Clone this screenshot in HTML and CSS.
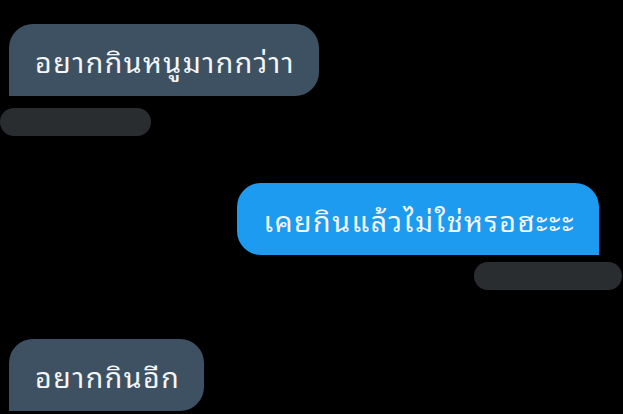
FILE: index.html
```html
<!DOCTYPE html>
<html lang="th">
<head>
<meta charset="utf-8">
<link rel="stylesheet" href="styles.css">
</head>
<body>
<div class="chat">
  <div class="msg in first">
    <div class="bubble in-bubble">อยากกินหนูมากกว่าา</div>
    <div class="meta meta-in"></div>
  </div>
  <div class="msg out">
    <div class="bubble out-bubble">เคยกินแล้วไม่ใช่หรอฮะะะ</div>
    <div class="meta meta-out"></div>
  </div>
  <div class="msg in last">
    <div class="bubble in-bubble">อยากกินอีก</div>
  </div>
</div>
</body>
</html>
```
FILE: styles.css
```css
html, body {
  margin: 0;
  padding: 0;
  background: #000;
  width: 623px;
  height: 414px;
  overflow: hidden;
}
.chat {
  display: flex;
  flex-direction: column;
  padding-top: 24px;
  font-family: "Noto Sans Thai Looped", "Noto Sans Thai", "Noto Sans", sans-serif;
}
.msg {
  display: flex;
  flex-direction: column;
}
.msg.in { align-items: flex-start; }
.msg.out { align-items: flex-end; margin-top: 47px; }
.msg.last { margin-top: 49px; }
.bubble {
  color: #f4f6f8;
  font-size: 28.5px;
  letter-spacing: 1.5px;
  line-height: 72px;
  height: 72px;
  padding: 0 24px 0 26px;
  box-sizing: border-box;
  white-space: nowrap;
}
.in-bubble {
  margin-left: 9px;
  background: #3d5163;
  border-radius: 24px 24px 24px 0;
}
.out-bubble {
  margin-right: 24px;
  background: #1d9bf0;
  border-radius: 24px 24px 0 24px;
}
.meta {
  height: 28px;
  background: #2a2d30;
  border-radius: 14px;
}
.meta-in {
  width: 151px;
  margin-top: 12px;
}
.meta-out {
  width: 148px;
  margin-top: 7px;
  margin-right: 1px;
}
```
